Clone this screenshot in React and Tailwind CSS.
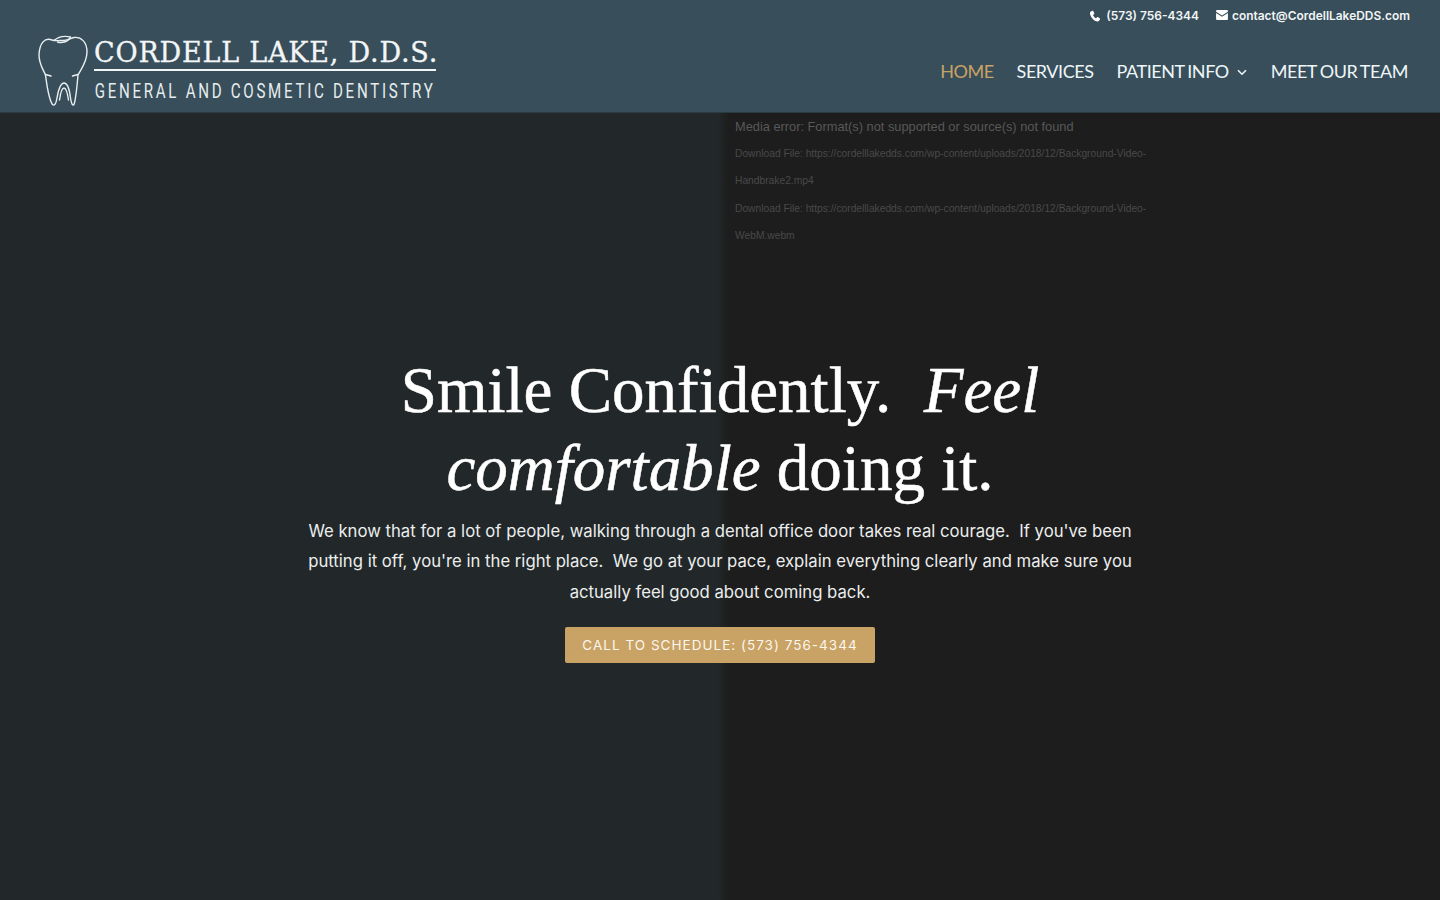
import React from "react";

const Tooth = () => (
  <svg width="60" height="78" viewBox="0 0 60 78" fill="none" stroke="#e9eff1" strokeWidth="1.400" strokeLinejoin="round" strokeLinecap="round" className="shrink-0">
    <path d="M18 8C11 5 5.500 11 5 23C5 32 9 37 11.500 43C13 54 14.500 67 18.500 72.500C20.500 74 22 72 23 66C24.500 57 27 51 30 51C33 51 35.500 57 36.500 66C37.500 72 38.500 74 40 72.500C42 67 43 54 44 43C47 37 53 30 53 20C53 10 47 4.500 40 5.500C36 6.500 33 8.500 29 8.500C25 8.500 21 9 18 8Z" />
    <path d="M20 8.500C24 5 30 3.500 36.500 5C35 9.500 28 11.500 23.500 10" />
    <path d="M25.500 68C26.500 61 28 56 30 56C32 56 33.500 61 34.500 68" />
    <path d="M11.500 42.500L17 44M44 42.500L38.500 44" />
  </svg>
);

const Phone = () => (
  <svg width="12" height="12" viewBox="0 0 24 24" fill="#ffffff"><path d="M6.600 1.500 3 3.500C1.500 5 1.500 8 3.500 12c2.500 5 5.500 8 9.500 10 2.500 1 5 1.200 6.500-.2l2.500-3c.4-.6.3-1.200-.2-1.600l-4-3c-.6-.4-1.200-.3-1.700.2l-1.700 1.900c-.4.3-.8.3-1.200.1-2.500-1.500-4-3.300-5-5.700-.1-.4 0-.8.3-1.100l1.800-1.600c.5-.5.6-1.100.2-1.700L8.500 2c-.5-.6-1.200-.9-1.900-.5Z" /></svg>
);

const Mail = () => (
  <svg width="12" height="10" viewBox="0 0 13 11" fill="#ffffff" className="-mt-[2px]"><path d="M1 0h11a1 1 0 0 1 1 1v.8L6.500 6 0 1.800V1a1 1 0 0 1 1-1Z" /><path d="M0 3.200 6.500 7.400 13 3.200V10a1 1 0 0 1-1 1H1a1 1 0 0 1-1-1Z" /></svg>
);

const Chevron = () => (
  <svg width="10" height="7" viewBox="0 0 10 7" fill="none" stroke="#eef6f9" strokeWidth="1.600" className="ml-[8px] mr-[1px] mt-[3px]"><path d="M1 1.200 5 5.200l4-4" /></svg>
);

const dm = "font-['Inter','Noto_Sans',sans-serif]";

export default function App() {
  return (
    <div className="h-[900px] overflow-hidden flex flex-col bg-[#1d1d1d]">
      <header className="h-[113px] shrink-0 bg-[#384e5a] border-b border-[#2b3b43] flex pl-[34px] pr-[32px]">
        <div className="flex items-start pt-[32px]">
          <Tooth />
          <div className="w-[342px] pt-[4px]">
            <div className="font-['DejaVu_Serif','Liberation_Serif',serif] text-[27px] leading-[34px] tracking-[0.800px] text-[#f3f6f7] whitespace-nowrap h-[33px] [-webkit-text-stroke:0.3px_#f3f6f7]">CORDELL LAKE, D.D.S.</div>
            <div className="h-[2px] bg-[#f3f6f7]" />
            <div className="font-['Roboto',sans-serif] text-[21px] leading-[24px] tracking-[3.750px] text-[#e6ecee] whitespace-nowrap mt-[8px] pl-[1px] origin-left scale-x-[0.72]">GENERAL AND COSMETIC DENTISTRY</div>
          </div>
        </div>
        <div className="ml-auto flex flex-col items-end">
          <div className={`${dm} flex items-center h-[32px] text-[11.950px] font-semibold text-[#f2f5f6] -mr-[2px]`}>
            <span className="flex items-center gap-[5px]"><Phone /><span>(573) 756-4344</span></span>
            <span className="flex items-center gap-[4px] ml-[17px]"><Mail /><span>contact@CordellLakeDDS.com</span></span>
          </div>
          <nav className="font-['Lato',sans-serif] flex items-center text-[18px] leading-[24px] tracking-[-0.450px] [word-spacing:-1px] text-[#eef6f9] mt-[27px] gap-[23px]">
            <span className="text-[#c9a265]">HOME</span>
            <span>SERVICES</span>
            <span className="flex items-center">PATIENT INFO<Chevron /></span>
            <span>MEET OUR TEAM</span>
          </nav>
        </div>
      </header>
      <main className="relative flex-1 bg-[linear-gradient(90deg,#222829_0%,#222829_49.800%,#1d1d1d_50.600%,#1d1d1d_100%)]">
        <div className="absolute left-[735px] top-0 w-[420px] font-['Liberation_Sans',sans-serif] text-[#585858]">
          <p className="text-[12.800px] leading-[27px]">Media error: Format(s) not supported or source(s) not found</p>
          <p className="text-[10.250px] leading-[27.400px] text-[#494949]">Download File: https://cordelllakedds.com/wp-content/uploads/2018/12/Background-Video-Handbrake2.mp4</p>
          <p className="text-[10.250px] leading-[27.400px] text-[#494949]">Download File: https://cordelllakedds.com/wp-content/uploads/2018/12/Background-Video-WebM.webm</p>
        </div>
        <div className="relative flex flex-col items-center pt-[238px]">
          <h1 className="font-['Liberation_Serif',serif] text-[65px] leading-[78px] text-white text-center w-[760px] [-webkit-text-stroke:0.5px_#ffffff]">
            Smile Confidently.&nbsp; <em>Feel comfortable</em> doing it.
          </h1>
          <p className={`${dm} text-[16.700px] leading-[30.400px] text-[#eceeee] text-center w-[860px] mt-[9px]`}>
            We know that for a lot of people, walking through a dental office door takes real courage.&nbsp; If you've been putting it off, you're in the right place.&nbsp; We go at your pace, explain everything clearly and make sure you actually feel good about coming back.
          </p>
          <a className={`${dm} mt-[20px] w-[310px] h-[36px] flex items-center justify-center rounded-[2px] bg-[#c9a265] text-[13.500px] leading-[34px] tracking-[1.020px] text-[#fbf6ec] whitespace-nowrap`}>
            CALL TO SCHEDULE: (573) 756-4344
          </a>
        </div>
      </main>
    </div>
  );
}
